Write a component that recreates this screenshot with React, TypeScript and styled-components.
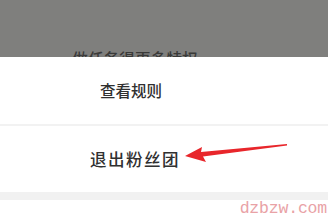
import React from 'react'
import styled, { createGlobalStyle } from 'styled-components'

const GlobalStyle = createGlobalStyle`
  html, body {
    margin: 0;
    padding: 0;
    width: 328px;
    height: 214px;
    overflow: hidden;
    background: #ffffff;
    font-family: "Noto Sans CJK SC", "Noto Sans", sans-serif;
  }
`

const Screen = styled.div`
  position: relative;
  width: 328px;
  height: 214px;
  display: flex;
  flex-direction: column;
  overflow: hidden;
`

const Overlay = styled.div`
  height: 57px;
  background: #7f7f7d;
  display: flex;
  align-items: flex-end;
  justify-content: center;
  padding-right: 58px;
  overflow: hidden;
`

const HiddenTitle = styled.div`
  font-size: 15.5px;
  font-weight: 500;
  line-height: 16px;
  color: #3a3a39;
  margin-bottom: -9px;
  letter-spacing: 0.2px;
`

const Sheet = styled.div`
  background: #ffffff;
  display: flex;
  flex-direction: column;
`

const Row = styled.div<{ $height: number; $shift: number }>`
  height: ${(p) => p.$height}px;
  display: flex;
  align-items: center;
  justify-content: center;
  padding-right: ${(p) => p.$shift}px;
`

const Label = styled.span<{ $size: number; $spacing: number }>`
  font-size: ${(p) => p.$size}px;
  letter-spacing: ${(p) => p.$spacing}px;
  font-weight: 500;
  color: #303030;
  line-height: 1;
`

const Divider = styled.div`
  height: 2px;
  background: #f2f2f2;
`

const Band = styled.div`
  height: 8px;
  background: #f1f1f1;
`

const Rest = styled.div`
  flex: 1;
  background: #ffffff;
`

const Watermark = styled.div`
  position: absolute;
  right: 1px;
  bottom: -4px;
  font-family: "Liberation Mono", monospace;
  font-size: 16.5px;
  color: #e9a2a6;
  letter-spacing: -0.2px;
`

const Arrow = styled.svg`
  position: absolute;
  left: 182px;
  top: 140px;
`

export default function App() {
  return (
    <>
      <GlobalStyle />
      <Screen>
        <Overlay>
          <HiddenTitle>做任务得更多特权</HiddenTitle>
        </Overlay>
        <Sheet>
          <Row $height={67} $shift={66}>
            <Label $size={15.5} $spacing={0}>查看规则</Label>
          </Row>
          <Divider />
          <Row $height={66} $shift={58}>
            <Label $size={16.5} $spacing={1.5}>退出粉丝团</Label>
          </Row>
        </Sheet>
        <Band />
        <Rest />
        <Watermark>dzbzw.com</Watermark>
        <Arrow width="110" height="24" viewBox="0 0 110 24">
          <path
            d="M3 16 L20 7 L19 12 L105 4 L105 5.5 L21 16.5 L24 22 Z"
            fill="#e8262b"
          />
        </Arrow>
      </Screen>
    </>
  )
}
